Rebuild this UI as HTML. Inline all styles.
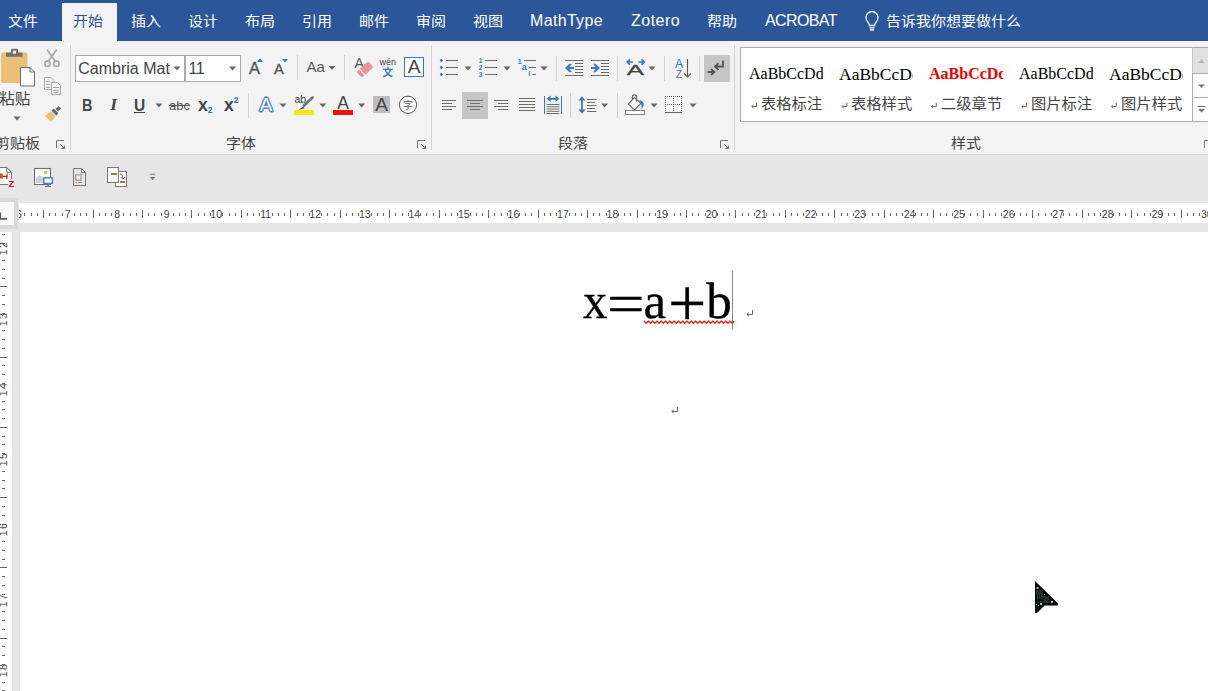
<!DOCTYPE html>
<html lang="zh-CN">
<head>
<meta charset="utf-8">
<title>Word</title>
<style>
html,body{margin:0;padding:0;}
body{width:1208px;height:691px;overflow:hidden;position:relative;background:#fff;font-family:"Liberation Sans","Noto Sans CJK SC",sans-serif;color:#444;}
.abs{position:absolute;}
#tabbar{left:0;top:0;width:1208px;height:41px;background:#2b579a;}
.tab{position:absolute;top:1px;height:40px;line-height:40px;font-size:15px;color:#fff;white-space:nowrap;}
.tab span{display:inline-block;transform-origin:0 50%;}
#acttab{left:62px;top:3px;width:55px;height:38px;background:#f3f3f3;}
#ribbon{left:0;top:41px;width:1208px;height:113px;background:#f3f3f3;}
#ribbonline{left:0;top:154px;width:1208px;height:1px;background:#d6d6d6;}
#qat{left:0;top:155px;width:1208px;height:77px;background:#e6e6e6;}
.glabel{position:absolute;top:133px;height:20px;line-height:20px;font-size:15px;color:#444;white-space:nowrap;transform:scaleY(0.93);transform-origin:50% 52%;}
.vsep{position:absolute;width:1px;background:#d2d2d2;}
.combo{position:absolute;top:55px;height:25px;background:#fff;border:1px solid #ababab;overflow:hidden;white-space:nowrap;font-size:16px;line-height:25px;color:#444;}
#hruler{left:19px;top:203px;width:1189px;height:20px;background:#fff;overflow:hidden;}
#vruler{left:0;top:232px;width:12px;height:459px;background:#fff;overflow:hidden;}
#doc{left:20px;top:232px;width:1188px;height:459px;background:#fff;}
#corner{left:0;top:198px;width:18px;height:31px;background:#d9d9d9;}
#cornerin{left:0;top:202px;width:14px;height:23px;background:#f9f9f9;}
.hl{position:absolute;background:#c6c6c6;}
#gallery{left:740px;top:47px;width:452px;height:73px;background:#fff;border:1px solid #ababab;overflow:hidden;}
.sty{position:absolute;top:0;width:90px;height:73px;}
.sty .pv{position:absolute;left:8px;top:13px;width:74px;height:26px;line-height:26px;overflow:hidden;white-space:nowrap;font-family:"Liberation Serif","Noto Serif CJK SC",serif;font-size:16px;color:#000;}
.sty .nm{position:absolute;left:20px;top:46px;height:20px;line-height:20px;font-size:15.3px;color:#444;white-space:nowrap;transform:scaleY(0.93);transform-origin:0 52%;}
.rt{position:absolute;font-size:10.5px;line-height:12px;color:#444;white-space:nowrap;text-align:center;}
.rb{position:absolute;font-weight:bold;color:#444;white-space:nowrap;}
</style>
</head>
<body>
<div class="abs" id="tabbar"></div>
<div class="abs" id="acttab"></div>
<div class="tab" id="t8" style="left:8px;transform:scaleY(0.93);transform-origin:50% 52%;">文件</div>
<div class="tab" id="t73" style="left:73px;color:#2b579a;transform:scaleY(0.93);transform-origin:50% 52%;">开始</div>
<div class="tab" id="t131" style="left:131px;transform:scaleY(0.93);transform-origin:50% 52%;">插入</div>
<div class="tab" id="t188" style="left:188px;transform:scaleY(0.93);transform-origin:50% 52%;">设计</div>
<div class="tab" id="t245" style="left:245px;transform:scaleY(0.93);transform-origin:50% 52%;">布局</div>
<div class="tab" id="t302" style="left:302px;transform:scaleY(0.93);transform-origin:50% 52%;">引用</div>
<div class="tab" id="t359" style="left:359px;transform:scaleY(0.93);transform-origin:50% 52%;">邮件</div>
<div class="tab" id="t416" style="left:416px;transform:scaleY(0.93);transform-origin:50% 52%;">审阅</div>
<div class="tab" id="t473" style="left:473px;transform:scaleY(0.93);transform-origin:50% 52%;">视图</div>
<div class="tab" id="t530" style="left:530px;font-size:16px;letter-spacing:0.33px;">MathType</div>
<div class="tab" id="t631" style="left:631px;font-size:16px;letter-spacing:0.5px;">Zotero</div>
<div class="tab" id="t707" style="left:707px;transform:scaleY(0.93);transform-origin:50% 52%;">帮助</div>
<div class="tab" id="t765" style="left:765px;font-size:16px;letter-spacing:-0.62px;">ACROBAT</div>
<div class="tab" id="t886" style="left:886px;transform:scaleY(0.93);transform-origin:50% 52%;">告诉我你想要做什么</div>
<div class="abs" id="ribbon"></div>
<div class="abs" id="ribbonline"></div>
<div class="abs" id="qat"></div>
<div class="glabel" style="left:-5px">剪贴板</div>
<div class="glabel" style="left:226px">字体</div>
<div class="glabel" style="left:558px">段落</div>
<div class="glabel" style="left:951px">样式</div>
<div class="vsep" style="left:70px;top:45px;height:105px"></div>
<div class="vsep" style="left:431px;top:45px;height:105px"></div>
<div class="vsep" style="left:734px;top:45px;height:105px"></div>
<div class="vsep" style="left:297px;top:55px;height:25px"></div>
<div class="vsep" style="left:344px;top:55px;height:25px"></div>
<div class="vsep" style="left:248px;top:93px;height:25px"></div>
<div class="vsep" style="left:556px;top:56px;height:25px"></div>
<div class="vsep" style="left:617px;top:56px;height:25px"></div>
<div class="vsep" style="left:664px;top:56px;height:25px"></div>
<div class="vsep" style="left:699px;top:56px;height:25px"></div>
<div class="vsep" style="left:570px;top:93px;height:25px"></div>
<div class="vsep" style="left:617px;top:93px;height:25px"></div>
<div class="hl" style="left:462px;top:92px;width:26px;height:27px"></div>
<div class="hl" style="left:704px;top:55px;width:26px;height:27px"></div>
<div class="combo" style="left:75px;width:108px"><span style="position:absolute;left:2.3px;top:0">Cambria Math</span><span style="position:absolute;left:94px;top:0;width:14px;height:25px;background:#fff"></span></div>
<div class="combo" style="left:185px;width:54px"><span style="position:absolute;left:2.5px;top:0;letter-spacing:-0.5px">11</span></div>
<div class="abs" style="left:-1.5px;top:89px;font-size:14.5px;line-height:20px;color:#444;white-space:nowrap;transform:scaleX(1.08);transform-origin:0 0">粘贴</div>
<div class="rb" style="left:81.7px;top:95.5px;font-size:16px;line-height:20px;transform:scaleX(0.9);transform-origin:0 0">B</div>
<div class="rb" style="left:110.3px;top:94px;line-height:20px;font-style:italic;font-family:'Liberation Serif',serif;font-size:17.5px">I</div>
<div class="rb" style="left:133.6px;top:95.5px;font-size:16px;line-height:20px;font-weight:bold;transform:scaleX(0.97);transform-origin:0 0">U</div>
<div class="abs" style="left:134px;top:112px;width:11px;height:1px;background:#444"></div>
<div class="abs" style="left:169px;top:96px;font-size:13px;line-height:20px;color:#555;text-decoration:line-through;white-space:nowrap">abc</div>
<div class="rb" style="left:198px;top:94.5px;font-size:17.5px;line-height:20px">x<span style="font-size:8.5px;color:#2b6cb8;font-weight:bold;position:relative;top:2.5px;left:0px">2</span></div>
<div class="rb" style="left:224px;top:94.5px;font-size:17.5px;line-height:20px">x<span style="font-size:8.5px;color:#2b6cb8;font-weight:bold;position:relative;top:-7.5px;left:0px">2</span></div>
<div class="abs" id="gallery">
<div class="sty" style="left:0px"><div class="pv" style="">AaBbCcDd</div><div class="nm">表格标注</div></div>
<div class="sty" style="left:90px"><div class="pv" style="font-size:17.5px;">AaBbCcDd</div><div class="nm">表格样式</div></div>
<div class="sty" style="left:180px"><div class="pv" style="color:#f00000;font-weight:bold;">AaBbCcDd</div><div class="nm">二级章节</div></div>
<div class="sty" style="left:270px"><div class="pv" style="">AaBbCcDd</div><div class="nm">图片标注</div></div>
<div class="sty" style="left:360px"><div class="pv" style="font-size:17.5px;">AaBbCcDd</div><div class="nm">图片样式</div></div>
</div>
<div class="abs" style="left:1192px;top:47px;width:16px;height:26px;background:#e1e1e1;border-left:1px solid #c6c6c6;border-top:1px solid #ababab;box-sizing:border-box"></div>
<div class="abs" style="left:1192px;top:73px;width:16px;height:25px;background:#fdfdfd;border-left:1px solid #ababab;border-top:1px solid #ababab;box-sizing:border-box"></div>
<div class="abs" style="left:1192px;top:97px;width:16px;height:25px;background:#fdfdfd;border-left:1px solid #ababab;border-top:1px solid #ababab;border-bottom:1px solid #ababab;box-sizing:border-box"></div>
<div class="abs" style="left:12px;top:229px;width:8px;height:462px;background:#e6e6e6"></div><div class="abs" id="corner"></div><div class="abs" id="cornerin"></div>
<div class="abs" id="hruler"></div>
<div class="abs" id="vruler"></div>
<div class="abs" id="doc"></div>
<svg class="abs" style="left:0;top:0" width="1208" height="691" viewBox="0 0 1208 691">
<g fill="none" stroke="#fff" stroke-width="1.3"><path d="M869.5,25.5 C869.5,23 866,21.5 866,17.5 a6,6 0 0 1 12,0 C878,21.5 874.5,23 874.5,25.5 Z"/><path d="M869.5,27.8 h5 M870,30 h4"/></g>
<rect x="1" y="52.5" width="26.5" height="30.5" rx="2" fill="#eabf78"/>
<rect x="6" y="52.5" width="16.5" height="4.3" fill="#77706f"/><rect x="11" y="48.7" width="7" height="5" rx="1" fill="#77706f"/><rect x="13" y="50.7" width="3" height="3" fill="#f3f3f3"/>
<path d="M20.5,67.5 h9.5 l4.5,4.5 v14 h-14 Z" fill="#fff" stroke="#6a6a6a" stroke-width="1"/><path d="M30,67.5 v4.5 h4.5" fill="none" stroke="#6a6a6a" stroke-width="1"/>
<polygon points="13.5,116.5 20.5,116.5 17.0,120.5" fill="#666"/>
<g fill="none" stroke="#a6a6a6" stroke-width="1.6"><path d="M47,49.5 L55.5,61.5 M56.7,49.5 L48.2,61.5"/><circle cx="47.5" cy="63.8" r="2.7"/><circle cx="56.4" cy="63.8" r="2.7"/></g>
<g fill="#f3f3f3" stroke="#a6a6a6" stroke-width="1"><path d="M44.5,77.5 h6.5 l3,3 v9 h-9.5 Z"/><path d="M51.5,82.5 h6 l3,3 v9 h-9 Z"/></g>
<g stroke="#a6a6a6" stroke-width="1"><path d="M46,81.5 h4 M46,84.5 h4 M46,87.5 h4 M53,87.5 h6 M53,90.5 h6 M53,92.5 h6"/></g>
<g transform="translate(53.3,113.7) rotate(45) scale(0.88)"><rect x="-2" y="-10.5" width="4" height="5" fill="#666"/><rect x="-3.8" y="-4.5" width="7.600" height="3.5" fill="#666"/><polygon points="-3.8,0 3.8,0 5,8.5 -5,8.5" fill="#eabf78"/></g>
<path d="M56.5,148.0 v-7.5 h7.5" fill="none" stroke="#777" stroke-width="1"/><path d="M60.0,144.0 l3.500,3.500" fill="none" stroke="#777" stroke-width="1"/><polygon points="65.0,145.0 65.0,149.0 61.0,149.0" fill="#777"/>
<path d="M417.5,148.0 v-7.5 h7.5" fill="none" stroke="#777" stroke-width="1"/><path d="M421.0,144.0 l3.500,3.500" fill="none" stroke="#777" stroke-width="1"/><polygon points="426.0,145.0 426.0,149.0 422.0,149.0" fill="#777"/>
<path d="M720.5,148.0 v-7.5 h7.5" fill="none" stroke="#777" stroke-width="1"/><path d="M724.0,144.0 l3.500,3.500" fill="none" stroke="#777" stroke-width="1"/><polygon points="729.0,145.0 729.0,149.0 725.0,149.0" fill="#777"/>
<path d="M1204.5,148 v-7.500 h5" fill="none" stroke="#777"/>
<polygon points="173.5,66.5 180.5,66.5 177.0,70.5" fill="#666"/>
<polygon points="229.0,66.5 236.0,66.5 232.5,70.5" fill="#666"/>
<text x="249" y="73.5" font-family="Liberation Sans, sans-serif" font-size="16.5" fill="#555" stroke="#555" stroke-width="0.35">A</text>
<polygon points="257,62 263,62 260,58.5" fill="#3b78c2"/>
<text x="274" y="73.5" font-family="Liberation Sans, sans-serif" font-size="14.5" fill="#555" stroke="#555" stroke-width="0.35">A</text>
<polygon points="282,59 288,59 285,62.5" fill="#3b78c2"/>
<text x="306.5" y="72" font-family="Liberation Sans, sans-serif" font-size="15" fill="#555">Aa</text>
<polygon points="328.5,66.0 335.5,66.0 332.0,70.0" fill="#666"/>
<text x="354.5" y="68" font-family="Liberation Sans, sans-serif" font-size="14" fill="#555">A</text>
<g transform="translate(365,69.5) rotate(-42)"><rect x="-8" y="-4" width="16" height="8" rx="2" fill="#e8929c"/><rect x="-4.5" y="-4" width="1.2" height="8" fill="#f3f3f3"/></g>
<text x="379.5" y="65" font-family="Liberation Sans, sans-serif" font-size="9" fill="#444">wén</text>
<text x="382.5" y="75.5" font-family="Noto Sans CJK SC, sans-serif" font-size="10.5" font-weight="bold" fill="#3b78c2">文</text>
<rect x="404.5" y="57.5" width="19" height="19" fill="#fff" stroke="#3b78c2"/>
<text x="414" y="73" text-anchor="middle" font-family="Liberation Sans, sans-serif" font-size="19" fill="#444">A</text>
<text x="266" y="111.4" text-anchor="middle" font-family="Liberation Sans, sans-serif" font-size="18.800" font-weight="normal" fill="#fff" stroke="#4a86cf" stroke-width="2.8" stroke-linejoin="round" paint-order="stroke">A</text>
<polygon points="279.5,103.5 286.5,103.5 283.0,107.5" fill="#666"/>
<text x="294.5" y="102.800" font-family="Liberation Sans, sans-serif" font-size="10.5" fill="#444">ab</text>
<path d="M304,105.5 L312.5,97.5" stroke="#777" stroke-width="3" stroke-linecap="round"/><path d="M298.5,110 L303,106.5 L304.800,108.300 Z" fill="#555"/>
<rect x="294" y="110" width="20" height="5" fill="#f2e817"/>
<polygon points="319.3,103.5 326.3,103.5 322.8,107.5" fill="#666"/>
<text x="343" y="108.5" text-anchor="middle" font-family="Liberation Sans, sans-serif" font-size="17.5" fill="#444">A</text>
<rect x="333" y="110" width="20" height="5" fill="#ee1111"/>
<polygon points="358.2,103.5 365.2,103.5 361.7,107.5" fill="#666"/>
<rect x="373" y="96" width="17" height="17" fill="#bdbdbd"/>
<text x="381.5" y="111" text-anchor="middle" font-family="Liberation Sans, sans-serif" font-size="19" fill="#444">A</text>
<circle cx="408" cy="104.8" r="8.6" fill="#fff" stroke="#555" stroke-width="1"/>
<text x="408" y="108.5" text-anchor="middle" font-family="Noto Sans CJK SC, sans-serif" font-size="10" fill="#555">字</text>
<polygon points="155.5,103.5 162.5,103.5 159.0,107.5" fill="#666"/>
<circle cx="441.3" cy="60.5" r="1.4" fill="#3b78c2"/>
<rect x="446" y="60.0" width="12" height="1" fill="#6e6e6e"/>
<circle cx="441.3" cy="67.5" r="1.4" fill="#3b78c2"/>
<rect x="446" y="67.0" width="12" height="1" fill="#6e6e6e"/>
<circle cx="441.3" cy="74.5" r="1.4" fill="#3b78c2"/>
<rect x="446" y="74.0" width="12" height="1" fill="#6e6e6e"/>
<polygon points="464.5,66.5 471.5,66.5 468.0,70.5" fill="#666"/>
<text x="480.5" y="62.9" text-anchor="middle" font-family="Liberation Sans, sans-serif" font-size="6.5" font-weight="bold" fill="#3b78c2">1</text>
<rect x="485" y="60.0" width="12" height="1" fill="#6e6e6e"/>
<text x="480.5" y="69.9" text-anchor="middle" font-family="Liberation Sans, sans-serif" font-size="6.5" font-weight="bold" fill="#3b78c2">2</text>
<rect x="485" y="67.0" width="12" height="1" fill="#6e6e6e"/>
<text x="480.5" y="76.9" text-anchor="middle" font-family="Liberation Sans, sans-serif" font-size="6.5" font-weight="bold" fill="#3b78c2">3</text>
<rect x="485" y="74.0" width="12" height="1" fill="#6e6e6e"/>
<polygon points="503.5,66.5 510.5,66.5 507.0,70.5" fill="#666"/>
<text x="519.7" y="64" text-anchor="middle" font-family="Liberation Sans, sans-serif" font-size="7" font-weight="bold" fill="#3b78c2">1</text>
<rect x="524" y="60" width="12" height="1" fill="#6e6e6e"/>
<text x="524.3" y="69.6" text-anchor="middle" font-family="Liberation Sans, sans-serif" font-size="9" font-weight="bold" fill="#3b78c2">a</text>
<rect x="529" y="67" width="7" height="1" fill="#6e6e6e"/>
<text x="529.2" y="75.8" text-anchor="middle" font-family="Liberation Sans, sans-serif" font-size="7.5" font-weight="bold" fill="#3b78c2">i</text>
<rect x="532" y="74" width="4" height="1" fill="#6e6e6e"/>
<polygon points="540.5,66.5 547.5,66.5 544.0,70.5" fill="#666"/>
<rect x="565" y="60" width="18" height="1" fill="#6e6e6e"/>
<rect x="575" y="63" width="8" height="1" fill="#6e6e6e"/>
<rect x="575" y="66" width="8" height="1" fill="#6e6e6e"/>
<rect x="575" y="69" width="8" height="1" fill="#6e6e6e"/>
<rect x="575" y="72" width="8" height="1" fill="#6e6e6e"/>
<rect x="565" y="75" width="18" height="1" fill="#6e6e6e"/>
<path d="M569,68 h5" fill="none" stroke="#3b78c2" stroke-width="2"/><path d="M569.6,63.8 l-4.6,4.2 l4.6,4.2 h2.4 l-3.4,-4.2 l3.4,-4.2 Z" fill="#3b78c2"/>
<rect x="591" y="60" width="18" height="1" fill="#6e6e6e"/>
<rect x="601" y="63" width="8" height="1" fill="#6e6e6e"/>
<rect x="601" y="66" width="8" height="1" fill="#6e6e6e"/>
<rect x="601" y="69" width="8" height="1" fill="#6e6e6e"/>
<rect x="601" y="72" width="8" height="1" fill="#6e6e6e"/>
<rect x="591" y="75" width="18" height="1" fill="#6e6e6e"/>
<path d="M591,68 h5" fill="none" stroke="#3b78c2" stroke-width="2"/><path d="M595.4,63.8 l4.6,4.2 l-4.6,4.2 h-2.4 l3.4,-4.2 l-3.4,-4.2 Z" fill="#3b78c2"/>
<rect x="442.0" y="100.0" width="14.0" height="1" fill="#6e6e6e"/>
<rect x="442.0" y="103.0" width="10.0" height="1" fill="#6e6e6e"/>
<rect x="442.0" y="106.0" width="14.0" height="1" fill="#6e6e6e"/>
<rect x="442.0" y="109.0" width="10.0" height="1" fill="#6e6e6e"/>
<rect x="467.0" y="100.0" width="16.0" height="1" fill="#6e6e6e"/>
<rect x="470.0" y="103.0" width="10.0" height="1" fill="#6e6e6e"/>
<rect x="467.0" y="106.0" width="16.0" height="1" fill="#6e6e6e"/>
<rect x="470.0" y="109.0" width="10.0" height="1" fill="#6e6e6e"/>
<rect x="494.0" y="100.0" width="14.0" height="1" fill="#6e6e6e"/>
<rect x="498.0" y="103.0" width="10.0" height="1" fill="#6e6e6e"/>
<rect x="494.0" y="106.0" width="14.0" height="1" fill="#6e6e6e"/>
<rect x="498.0" y="109.0" width="10.0" height="1" fill="#6e6e6e"/>
<rect x="519.0" y="98.0" width="16.0" height="1" fill="#6e6e6e"/>
<rect x="519.0" y="101.0" width="16.0" height="1" fill="#6e6e6e"/>
<rect x="519.0" y="104.0" width="16.0" height="1" fill="#6e6e6e"/>
<rect x="519.0" y="107.0" width="16.0" height="1" fill="#6e6e6e"/>
<rect x="519.0" y="110.0" width="16.0" height="1" fill="#6e6e6e"/>
<rect x="544" y="96" width="1" height="18" fill="#3b78c2"/><rect x="561" y="96" width="1" height="18" fill="#3b78c2"/>
<path d="M548,98.800 h10" fill="none" stroke="#3b78c2" stroke-width="1.800"/><path d="M550.500,95.600 l-3.800,3.200 l3.800,3.200 Z M555.500,95.600 l3.800,3.200 l-3.800,3.200 Z" fill="#3b78c2"/>
<rect x="546.5" y="104.0" width="13.0" height="1" fill="#6e6e6e"/>
<rect x="546.5" y="106.2" width="13.0" height="1" fill="#6e6e6e"/>
<rect x="546.5" y="108.5" width="13.0" height="1" fill="#6e6e6e"/>
<rect x="546.5" y="110.8" width="13.0" height="1" fill="#6e6e6e"/>
<rect x="546.5" y="113.0" width="13.0" height="1" fill="#6e6e6e"/>
<path d="M582,99 v12" fill="none" stroke="#3b78c2" stroke-width="1.800"/><path d="M578.500,100.500 l3.500,-4.300 l3.500,4.300 Z M578.500,109.500 l3.500,4.300 l3.500,-4.300 Z" fill="#3b78c2"/>
<rect x="587.0" y="99.0" width="9.5" height="1" fill="#6e6e6e"/>
<rect x="587.0" y="102.0" width="8.0" height="1" fill="#6e6e6e"/>
<rect x="587.0" y="105.0" width="9.5" height="1" fill="#6e6e6e"/>
<rect x="587.0" y="108.0" width="8.0" height="1" fill="#6e6e6e"/>
<rect x="587.0" y="111.0" width="9.5" height="1" fill="#6e6e6e"/>
<polygon points="601.2,103.5 608.2,103.5 604.7,107.5" fill="#666"/>
<text x="635.5" y="75" text-anchor="middle" font-family="Liberation Sans, sans-serif" font-size="14" fill="#444" stroke="#444" stroke-width="0.3" transform="translate(635.5,0) scale(1.85,1) translate(-635.5,0)">A</text>
<path d="M627.5,62 h5.5 M630,59.3 l-2.8,2.7 l2.8,2.7 M638.5,62 h5.5 M641.5,59.3 l2.8,2.7 l-2.8,2.7" fill="none" stroke="#3b78c2" stroke-width="1.7"/>
<polygon points="648.5,66.5 655.5,66.5 652.0,70.5" fill="#666"/>
<text x="679" y="68" text-anchor="middle" font-family="Liberation Sans, sans-serif" font-size="12" fill="#3b78c2">A</text>
<text x="679" y="77.5" text-anchor="middle" font-family="Liberation Sans, sans-serif" font-size="10.5" fill="#5b6db5">Z</text>
<path d="M687.5,59 v18 M684,73.5 l3.5,3.5 l3.5,-3.5" fill="none" stroke="#555" stroke-width="1.1"/>
<path d="M723,60.5 v6 h-7.5 M718.5,63.2 l-3.5,3.3 l3.5,3.3" fill="none" stroke="#555" stroke-width="1.8"/>
<path d="M707.5,72 h6.5 M711,68.8 l3.5,3.2 l-3.5,3.2" fill="none" stroke="#555" stroke-width="1.8"/>
<rect x="625.5" y="110.5" width="19" height="4" fill="#fff" stroke="#858585"/>
<path d="M628.3,104.2 L634.3,97.6 L640.9,103.4 L634.6,110 Z" fill="#fff" stroke="#666" stroke-width="1.1"/>
<path d="M632.4,100 v-3 a2.1,2.1 0 0 1 4.200,0 v4.600" fill="none" stroke="#666" stroke-width="1.1"/>
<path d="M639.200,99.800 q5,1.500 4.600,5 q-0.800,2.500 -2.200,4.800 q0.600,-5.500 -2.400,-9.800 Z" fill="#3b78c2"/>
<polygon points="650.5,103.5 657.5,103.5 654.0,107.5" fill="#666"/>
<rect x="665" y="96" width="17" height="15" fill="#fff"/>
<g stroke="#555" stroke-width="1" stroke-dasharray="1,1" fill="none" shape-rendering="crispEdges"><path d="M665,96.500 h17 M665,104.500 h17 M665.500,96 v15 M673.500,96 v15 M681.500,96 v15"/></g>
<rect x="665" y="112" width="17" height="1" fill="#666"/>
<polygon points="689.5,103.5 696.5,103.5 693.0,107.5" fill="#666"/>
<polygon points="1198,63 1205,63 1201.5,59.5" fill="#b5b5b5"/>
<polygon points="1198,84.5 1205,84.5 1201.5,88" fill="#777"/>
<rect x="1197.5" y="106" width="8" height="1" fill="#777"/><polygon points="1198,109 1205,109 1201.5,112.5" fill="#777"/>
<path d="M756.5,102.8 v3.8 h-3.8" fill="none" stroke="#666" stroke-width="1"/><polygon points="751.3,106.6 753.5,104.5 752.9,106.6 753.5,108.8" fill="#666"/>
<path d="M846.9,102.8 v3.8 h-3.8" fill="none" stroke="#666" stroke-width="1"/><polygon points="841.7,106.6 843.9,104.5 843.3,106.6 843.9,108.8" fill="#666"/>
<path d="M936.3,102.8 v3.8 h-3.8" fill="none" stroke="#666" stroke-width="1"/><polygon points="931.1,106.6 933.3,104.5 932.7,106.6 933.3,108.8" fill="#666"/>
<path d="M1026.5,102.8 v3.8 h-3.8" fill="none" stroke="#666" stroke-width="1"/><polygon points="1021.3,106.6 1023.5,104.5 1022.9,106.6 1023.5,108.8" fill="#666"/>
<path d="M1116.2,102.8 v3.8 h-3.8" fill="none" stroke="#666" stroke-width="1"/><polygon points="1111.0,106.6 1113.2,104.5 1112.6,106.6 1113.2,108.8" fill="#666"/>
<path d="M-3,167.5 H6.7 L11.5,172.3 V184.5 H-3" fill="#fff" stroke="#777"/><path d="M6.7,167.5 V172.3 H11.5 Z" fill="#f0f0f0" stroke="#555" stroke-width="0.8"/>
<rect x="8" y="179" width="8" height="9" fill="#e6e6e6"/>
<rect x="-1" y="173.500" width="2.500" height="4.800" fill="#b85a10"/>
<path d="M1.500,176.300 h5.500 M2,173.500 v5.500 M7,173.500 v5.500" fill="none" stroke="#d01818" stroke-width="1.200"/>
<text x="8.600" y="186.700" font-family="Liberation Sans, sans-serif" font-size="9.500" font-weight="bold" fill="#cc1414">Z</text>
<rect x="34.500" y="168.500" width="16" height="16" fill="#fff" stroke="#6e6e6e" stroke-width="1.100"/>
<polygon points="36,183 36,178 39.500,175 43,178 43,183" fill="#c8d1de"/>
<rect x="44" y="171" width="3" height="3" fill="#eab676"/>
<rect x="43.800" y="177.800" width="8.600" height="5.600" fill="#fff" stroke="#3b78c2" stroke-width="1.300"/>
<path d="M48.100,184 v2.400 M45,186.500 h6" stroke="#3b78c2" stroke-width="1.200" fill="none"/>
<path d="M73.500,168.500 H81.500 L85.500,172.500 V185.500 H73.500 Z" fill="none" stroke="#777"/><path d="M81.500,168.500 V172.500 H85.500" fill="none" stroke="#777"/>
<rect x="75.800" y="174.800" width="5.200" height="5.400" fill="#f2f2f2" stroke="#888"/>
<path d="M75.200,182.500 h1.600 M78,182.500 h4" stroke="#e07a30" stroke-width="1"/>
<rect x="115.500" y="171.500" width="11" height="15" fill="#fff" stroke="#777"/>
<rect x="107.500" y="167.500" width="11" height="15" fill="#fff" stroke="#777"/>
<path d="M111,174 h6" stroke="#b5470f" stroke-width="1.600"/><path d="M120,182 h5" stroke="#b5470f" stroke-width="1.600"/>
<path d="M120,173.800 q2.800,0.300 2.700,5 M120.500,177 l2.200,2.200 l2.200,-2.200" fill="none" stroke="#666" stroke-width="1"/>
<rect x="149.800" y="173.700" width="5.400" height="1" fill="#777"/><polygon points="149.800,177 155.200,177 152.500,180.200" fill="#777"/>
<path d="M0.300,212.500 v6.300 h6.700" fill="none" stroke="#655d5d" stroke-width="1.7"/>
<rect x="24" y="213" width="1" height="3" fill="#666"/>
<rect x="31" y="213" width="1" height="3" fill="#666"/>
<rect x="37" y="213" width="1" height="3" fill="#666"/>
<rect x="43" y="210" width="1" height="8" fill="#666"/>
<rect x="49" y="213" width="1" height="3" fill="#666"/>
<rect x="55" y="213" width="1" height="3" fill="#666"/>
<rect x="62" y="213" width="1" height="3" fill="#666"/>
<rect x="74" y="213" width="1" height="3" fill="#666"/>
<rect x="80" y="213" width="1" height="3" fill="#666"/>
<rect x="86" y="213" width="1" height="3" fill="#666"/>
<rect x="93" y="210" width="1" height="8" fill="#666"/>
<rect x="99" y="213" width="1" height="3" fill="#666"/>
<rect x="105" y="213" width="1" height="3" fill="#666"/>
<rect x="111" y="213" width="1" height="3" fill="#666"/>
<rect x="123" y="213" width="1" height="3" fill="#666"/>
<rect x="130" y="213" width="1" height="3" fill="#666"/>
<rect x="136" y="213" width="1" height="3" fill="#666"/>
<rect x="142" y="210" width="1" height="8" fill="#666"/>
<rect x="148" y="213" width="1" height="3" fill="#666"/>
<rect x="154" y="213" width="1" height="3" fill="#666"/>
<rect x="161" y="213" width="1" height="3" fill="#666"/>
<rect x="173" y="213" width="1" height="3" fill="#666"/>
<rect x="179" y="213" width="1" height="3" fill="#666"/>
<rect x="185" y="213" width="1" height="3" fill="#666"/>
<rect x="191" y="210" width="1" height="8" fill="#666"/>
<rect x="198" y="213" width="1" height="3" fill="#666"/>
<rect x="204" y="213" width="1" height="3" fill="#666"/>
<rect x="210" y="213" width="1" height="3" fill="#666"/>
<rect x="222" y="213" width="1" height="3" fill="#666"/>
<rect x="229" y="213" width="1" height="3" fill="#666"/>
<rect x="235" y="213" width="1" height="3" fill="#666"/>
<rect x="241" y="210" width="1" height="8" fill="#666"/>
<rect x="247" y="213" width="1" height="3" fill="#666"/>
<rect x="253" y="213" width="1" height="3" fill="#666"/>
<rect x="259" y="213" width="1" height="3" fill="#666"/>
<rect x="272" y="213" width="1" height="3" fill="#666"/>
<rect x="278" y="213" width="1" height="3" fill="#666"/>
<rect x="284" y="213" width="1" height="3" fill="#666"/>
<rect x="290" y="210" width="1" height="8" fill="#666"/>
<rect x="297" y="213" width="1" height="3" fill="#666"/>
<rect x="303" y="213" width="1" height="3" fill="#666"/>
<rect x="309" y="213" width="1" height="3" fill="#666"/>
<rect x="321" y="213" width="1" height="3" fill="#666"/>
<rect x="327" y="213" width="1" height="3" fill="#666"/>
<rect x="334" y="213" width="1" height="3" fill="#666"/>
<rect x="340" y="210" width="1" height="8" fill="#666"/>
<rect x="346" y="213" width="1" height="3" fill="#666"/>
<rect x="352" y="213" width="1" height="3" fill="#666"/>
<rect x="358" y="213" width="1" height="3" fill="#666"/>
<rect x="371" y="213" width="1" height="3" fill="#666"/>
<rect x="377" y="213" width="1" height="3" fill="#666"/>
<rect x="383" y="213" width="1" height="3" fill="#666"/>
<rect x="389" y="210" width="1" height="8" fill="#666"/>
<rect x="395" y="213" width="1" height="3" fill="#666"/>
<rect x="402" y="213" width="1" height="3" fill="#666"/>
<rect x="408" y="213" width="1" height="3" fill="#666"/>
<rect x="420" y="213" width="1" height="3" fill="#666"/>
<rect x="426" y="213" width="1" height="3" fill="#666"/>
<rect x="433" y="213" width="1" height="3" fill="#666"/>
<rect x="439" y="210" width="1" height="8" fill="#666"/>
<rect x="445" y="213" width="1" height="3" fill="#666"/>
<rect x="451" y="213" width="1" height="3" fill="#666"/>
<rect x="457" y="213" width="1" height="3" fill="#666"/>
<rect x="470" y="213" width="1" height="3" fill="#666"/>
<rect x="476" y="213" width="1" height="3" fill="#666"/>
<rect x="482" y="213" width="1" height="3" fill="#666"/>
<rect x="488" y="210" width="1" height="8" fill="#666"/>
<rect x="494" y="213" width="1" height="3" fill="#666"/>
<rect x="501" y="213" width="1" height="3" fill="#666"/>
<rect x="507" y="213" width="1" height="3" fill="#666"/>
<rect x="519" y="213" width="1" height="3" fill="#666"/>
<rect x="525" y="213" width="1" height="3" fill="#666"/>
<rect x="531" y="213" width="1" height="3" fill="#666"/>
<rect x="538" y="210" width="1" height="8" fill="#666"/>
<rect x="544" y="213" width="1" height="3" fill="#666"/>
<rect x="550" y="213" width="1" height="3" fill="#666"/>
<rect x="556" y="213" width="1" height="3" fill="#666"/>
<rect x="569" y="213" width="1" height="3" fill="#666"/>
<rect x="575" y="213" width="1" height="3" fill="#666"/>
<rect x="581" y="213" width="1" height="3" fill="#666"/>
<rect x="587" y="210" width="1" height="8" fill="#666"/>
<rect x="593" y="213" width="1" height="3" fill="#666"/>
<rect x="599" y="213" width="1" height="3" fill="#666"/>
<rect x="606" y="213" width="1" height="3" fill="#666"/>
<rect x="618" y="213" width="1" height="3" fill="#666"/>
<rect x="624" y="213" width="1" height="3" fill="#666"/>
<rect x="630" y="213" width="1" height="3" fill="#666"/>
<rect x="637" y="210" width="1" height="8" fill="#666"/>
<rect x="643" y="213" width="1" height="3" fill="#666"/>
<rect x="649" y="213" width="1" height="3" fill="#666"/>
<rect x="655" y="213" width="1" height="3" fill="#666"/>
<rect x="667" y="213" width="1" height="3" fill="#666"/>
<rect x="674" y="213" width="1" height="3" fill="#666"/>
<rect x="680" y="213" width="1" height="3" fill="#666"/>
<rect x="686" y="210" width="1" height="8" fill="#666"/>
<rect x="692" y="213" width="1" height="3" fill="#666"/>
<rect x="698" y="213" width="1" height="3" fill="#666"/>
<rect x="705" y="213" width="1" height="3" fill="#666"/>
<rect x="717" y="213" width="1" height="3" fill="#666"/>
<rect x="723" y="213" width="1" height="3" fill="#666"/>
<rect x="729" y="213" width="1" height="3" fill="#666"/>
<rect x="735" y="210" width="1" height="8" fill="#666"/>
<rect x="742" y="213" width="1" height="3" fill="#666"/>
<rect x="748" y="213" width="1" height="3" fill="#666"/>
<rect x="754" y="213" width="1" height="3" fill="#666"/>
<rect x="766" y="213" width="1" height="3" fill="#666"/>
<rect x="773" y="213" width="1" height="3" fill="#666"/>
<rect x="779" y="213" width="1" height="3" fill="#666"/>
<rect x="785" y="210" width="1" height="8" fill="#666"/>
<rect x="791" y="213" width="1" height="3" fill="#666"/>
<rect x="797" y="213" width="1" height="3" fill="#666"/>
<rect x="803" y="213" width="1" height="3" fill="#666"/>
<rect x="816" y="213" width="1" height="3" fill="#666"/>
<rect x="822" y="213" width="1" height="3" fill="#666"/>
<rect x="828" y="213" width="1" height="3" fill="#666"/>
<rect x="834" y="210" width="1" height="8" fill="#666"/>
<rect x="841" y="213" width="1" height="3" fill="#666"/>
<rect x="847" y="213" width="1" height="3" fill="#666"/>
<rect x="853" y="213" width="1" height="3" fill="#666"/>
<rect x="865" y="213" width="1" height="3" fill="#666"/>
<rect x="872" y="213" width="1" height="3" fill="#666"/>
<rect x="878" y="213" width="1" height="3" fill="#666"/>
<rect x="884" y="210" width="1" height="8" fill="#666"/>
<rect x="890" y="213" width="1" height="3" fill="#666"/>
<rect x="896" y="213" width="1" height="3" fill="#666"/>
<rect x="902" y="213" width="1" height="3" fill="#666"/>
<rect x="915" y="213" width="1" height="3" fill="#666"/>
<rect x="921" y="213" width="1" height="3" fill="#666"/>
<rect x="927" y="213" width="1" height="3" fill="#666"/>
<rect x="933" y="210" width="1" height="8" fill="#666"/>
<rect x="940" y="213" width="1" height="3" fill="#666"/>
<rect x="946" y="213" width="1" height="3" fill="#666"/>
<rect x="952" y="213" width="1" height="3" fill="#666"/>
<rect x="964" y="213" width="1" height="3" fill="#666"/>
<rect x="970" y="213" width="1" height="3" fill="#666"/>
<rect x="977" y="213" width="1" height="3" fill="#666"/>
<rect x="983" y="210" width="1" height="8" fill="#666"/>
<rect x="989" y="213" width="1" height="3" fill="#666"/>
<rect x="995" y="213" width="1" height="3" fill="#666"/>
<rect x="1001" y="213" width="1" height="3" fill="#666"/>
<rect x="1014" y="213" width="1" height="3" fill="#666"/>
<rect x="1020" y="213" width="1" height="3" fill="#666"/>
<rect x="1026" y="213" width="1" height="3" fill="#666"/>
<rect x="1032" y="210" width="1" height="8" fill="#666"/>
<rect x="1038" y="213" width="1" height="3" fill="#666"/>
<rect x="1045" y="213" width="1" height="3" fill="#666"/>
<rect x="1051" y="213" width="1" height="3" fill="#666"/>
<rect x="1063" y="213" width="1" height="3" fill="#666"/>
<rect x="1069" y="213" width="1" height="3" fill="#666"/>
<rect x="1076" y="213" width="1" height="3" fill="#666"/>
<rect x="1082" y="210" width="1" height="8" fill="#666"/>
<rect x="1088" y="213" width="1" height="3" fill="#666"/>
<rect x="1094" y="213" width="1" height="3" fill="#666"/>
<rect x="1100" y="213" width="1" height="3" fill="#666"/>
<rect x="1113" y="213" width="1" height="3" fill="#666"/>
<rect x="1119" y="213" width="1" height="3" fill="#666"/>
<rect x="1125" y="213" width="1" height="3" fill="#666"/>
<rect x="1131" y="210" width="1" height="8" fill="#666"/>
<rect x="1137" y="213" width="1" height="3" fill="#666"/>
<rect x="1144" y="213" width="1" height="3" fill="#666"/>
<rect x="1150" y="213" width="1" height="3" fill="#666"/>
<rect x="1162" y="213" width="1" height="3" fill="#666"/>
<rect x="1168" y="213" width="1" height="3" fill="#666"/>
<rect x="1174" y="213" width="1" height="3" fill="#666"/>
<rect x="1181" y="210" width="1" height="8" fill="#666"/>
<rect x="1187" y="213" width="1" height="3" fill="#666"/>
<rect x="1193" y="213" width="1" height="3" fill="#666"/>
<rect x="1199" y="213" width="1" height="3" fill="#666"/>
<rect x="2" y="234" width="3" height="1" fill="#666"/>
<rect x="2" y="243" width="3" height="1" fill="#666"/>
<rect x="2" y="260" width="3" height="1" fill="#666"/>
<rect x="2" y="269" width="3" height="1" fill="#666"/>
<rect x="2" y="278" width="3" height="1" fill="#666"/>
<rect x="0" y="286" width="7" height="1" fill="#666"/>
<rect x="2" y="295" width="3" height="1" fill="#666"/>
<rect x="2" y="304" width="3" height="1" fill="#666"/>
<rect x="2" y="313" width="3" height="1" fill="#666"/>
<rect x="2" y="330" width="3" height="1" fill="#666"/>
<rect x="2" y="339" width="3" height="1" fill="#666"/>
<rect x="2" y="348" width="3" height="1" fill="#666"/>
<rect x="0" y="357" width="7" height="1" fill="#666"/>
<rect x="2" y="365" width="3" height="1" fill="#666"/>
<rect x="2" y="374" width="3" height="1" fill="#666"/>
<rect x="2" y="383" width="3" height="1" fill="#666"/>
<rect x="2" y="401" width="3" height="1" fill="#666"/>
<rect x="2" y="409" width="3" height="1" fill="#666"/>
<rect x="2" y="418" width="3" height="1" fill="#666"/>
<rect x="0" y="427" width="7" height="1" fill="#666"/>
<rect x="2" y="436" width="3" height="1" fill="#666"/>
<rect x="2" y="444" width="3" height="1" fill="#666"/>
<rect x="2" y="453" width="3" height="1" fill="#666"/>
<rect x="2" y="471" width="3" height="1" fill="#666"/>
<rect x="2" y="480" width="3" height="1" fill="#666"/>
<rect x="2" y="488" width="3" height="1" fill="#666"/>
<rect x="0" y="497" width="7" height="1" fill="#666"/>
<rect x="2" y="506" width="3" height="1" fill="#666"/>
<rect x="2" y="515" width="3" height="1" fill="#666"/>
<rect x="2" y="524" width="3" height="1" fill="#666"/>
<rect x="2" y="541" width="3" height="1" fill="#666"/>
<rect x="2" y="550" width="3" height="1" fill="#666"/>
<rect x="2" y="559" width="3" height="1" fill="#666"/>
<rect x="0" y="567" width="7" height="1" fill="#666"/>
<rect x="2" y="576" width="3" height="1" fill="#666"/>
<rect x="2" y="585" width="3" height="1" fill="#666"/>
<rect x="2" y="594" width="3" height="1" fill="#666"/>
<rect x="2" y="611" width="3" height="1" fill="#666"/>
<rect x="2" y="620" width="3" height="1" fill="#666"/>
<rect x="2" y="629" width="3" height="1" fill="#666"/>
<rect x="0" y="638" width="7" height="1" fill="#666"/>
<rect x="2" y="646" width="3" height="1" fill="#666"/>
<rect x="2" y="655" width="3" height="1" fill="#666"/>
<rect x="2" y="664" width="3" height="1" fill="#666"/>
<rect x="2" y="682" width="3" height="1" fill="#666"/>
<rect x="2" y="690" width="3" height="1" fill="#666"/>
<path d="M752.5,310.0 v4.5 h-4.5" fill="none" stroke="#6b6767" stroke-width="1"/><polygon points="746.3,314.5 749.0,312.0 748.2,314.5 749.0,317.0" fill="#6b6767"/>
<path d="M677.5,407.0 v4.5 h-4.5" fill="none" stroke="#6b6767" stroke-width="1"/><polygon points="671.3,411.5 674.0,409.0 673.2,411.5 674.0,414.0" fill="#6b6767"/>
<rect x="732" y="271" width="1" height="58" fill="#8c8c8c"/>
<path d="M644,321 l2.15,2.4 l2.15,-2.4 l2.15,2.4 l2.15,-2.4 l2.15,2.4 l2.15,-2.4 l2.15,2.4 l2.15,-2.4 l2.15,2.4 l2.15,-2.4 l2.15,2.4 l2.15,-2.4 l2.15,2.4 l2.15,-2.4 l2.15,2.4 l2.15,-2.4 l2.15,2.4 l2.15,-2.4 l2.15,2.4 l2.15,-2.4 l2.15,2.4 l2.15,-2.4 l2.15,2.4 l2.15,-2.4 l2.15,2.4 l2.15,-2.4 l2.15,2.4 l2.15,-2.4 l2.15,2.4 l2.15,-2.4 l2.15,2.4 l2.15,-2.4 l2.15,2.4 l2.15,-2.4 l2.15,2.4 l2.15,-2.4 l2.15,2.4 l2.15,-2.4 l2.15,2.4 l2.15,-2.4 l2.15,2.4 l2.15,-2.4" fill="none" stroke="#e8200c" stroke-width="1.25" stroke-linejoin="round"/>
<polygon points="1035,581 1058,603.500 1058,605.500 1044.500,605.500 1037,613 1035,613" fill="#050505"/>
<rect x="1036" y="590" width="7" height="5" fill="#2b2b2e"/><rect x="1044" y="596" width="5" height="7" fill="#2b2b2e"/>
<g fill="#a9b8aa"><rect x="1036.500" y="587" width="2" height="2"/><rect x="1051" y="601" width="2" height="2"/><rect x="1040" y="603" width="2" height="2"/><rect x="1037" y="597" width="1" height="1"/><rect x="1044" y="594" width="1" height="1"/><rect x="1036" y="604" width="1" height="1"/><rect x="1038" y="605" width="1" height="1"/></g>
<path d="M1037.500,595 v5 M1039.500,595 v4 h4.500 M1041.500,595 v2 h2.500 M1044,601.500 h-4 l-2,2 M1036.500,605 v3 h2" fill="none" stroke="#0f5a17" stroke-width="0.800"/>
</svg>
<div class="rt" style="left:52.6px;top:208px;width:30px">7</div><div class="rt" style="left:102.1px;top:208px;width:30px">8</div><div class="rt" style="left:151.7px;top:208px;width:30px">9</div><div class="rt" style="left:201.2px;top:208px;width:30px">10</div><div class="rt" style="left:250.7px;top:208px;width:30px">11</div><div class="rt" style="left:300.2px;top:208px;width:30px">12</div><div class="rt" style="left:349.8px;top:208px;width:30px">13</div><div class="rt" style="left:399.3px;top:208px;width:30px">14</div><div class="rt" style="left:448.8px;top:208px;width:30px">15</div><div class="rt" style="left:498.4px;top:208px;width:30px">16</div><div class="rt" style="left:547.9px;top:208px;width:30px">17</div><div class="rt" style="left:597.4px;top:208px;width:30px">18</div><div class="rt" style="left:647.0px;top:208px;width:30px">19</div><div class="rt" style="left:696.5px;top:208px;width:30px">20</div><div class="rt" style="left:746.0px;top:208px;width:30px">21</div><div class="rt" style="left:795.6px;top:208px;width:30px">22</div><div class="rt" style="left:845.1px;top:208px;width:30px">23</div><div class="rt" style="left:894.6px;top:208px;width:30px">24</div><div class="rt" style="left:944.1px;top:208px;width:30px">25</div><div class="rt" style="left:993.7px;top:208px;width:30px">26</div><div class="rt" style="left:1043.2px;top:208px;width:30px">27</div><div class="rt" style="left:1092.7px;top:208px;width:30px">28</div><div class="rt" style="left:1142.3px;top:208px;width:30px">29</div><div class="rt" style="left:1191.8px;top:208px;width:30px">30</div>
<div class="rt" style="left:3.8px;top:208px;width:30px;clip-path:inset(0 0 0 15.2px)">6</div>
<div class="rt" style="left:-12px;top:242.4px;width:30px;letter-spacing:1.3px;transform:rotate(-90deg)">12</div><div class="rt" style="left:-12px;top:312.7px;width:30px;letter-spacing:1.3px;transform:rotate(-90deg)">13</div><div class="rt" style="left:-12px;top:382.9px;width:30px;letter-spacing:1.3px;transform:rotate(-90deg)">14</div><div class="rt" style="left:-12px;top:453.2px;width:30px;letter-spacing:1.3px;transform:rotate(-90deg)">15</div><div class="rt" style="left:-12px;top:523.4px;width:30px;letter-spacing:1.3px;transform:rotate(-90deg)">16</div><div class="rt" style="left:-12px;top:593.6px;width:30px;letter-spacing:1.3px;transform:rotate(-90deg)">17</div><div class="rt" style="left:-12px;top:663.9px;width:30px;letter-spacing:1.3px;transform:rotate(-90deg)">18</div>
<div class="abs" id="eq" style="left:0;top:0;font-family:'Liberation Serif',serif;color:#000;white-space:nowrap;-webkit-text-stroke:0.3px #000"><span style="position:absolute;left:582.8px;top:275.9px;font-size:51.0px;line-height:1;transform:scaleX(0.95);transform-origin:0 0">x</span><span style="position:absolute;left:606.9px;top:275.5px;font-size:56px;line-height:1;transform:scaleX(1.19);transform-origin:0 0">=</span><span style="position:absolute;left:643.4px;top:275.9px;font-size:51.0px;line-height:1">a</span><span style="position:absolute;left:668.0px;top:268.7px;font-size:68.0px;line-height:1">+</span><span style="position:absolute;left:706.3px;top:275.9px;font-size:51.0px;line-height:1">b</span></div>
</body>
</html>
